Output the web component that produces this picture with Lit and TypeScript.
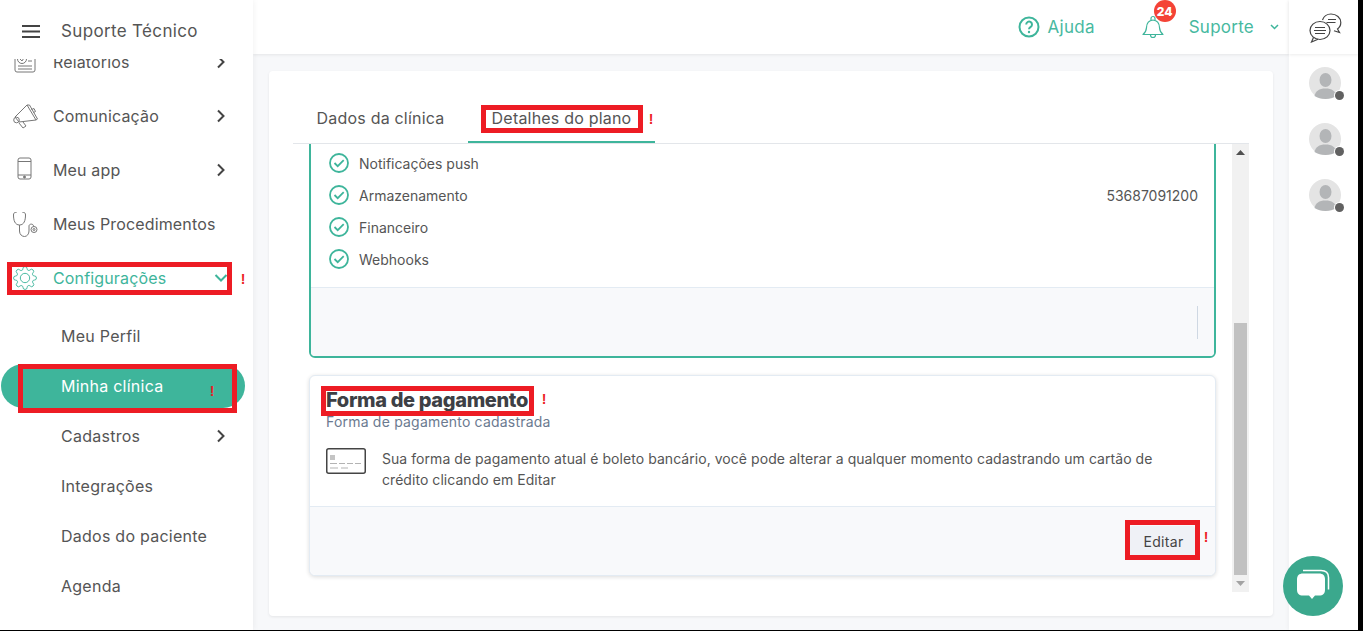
import { LitElement, html, css, svg } from "lit";
import { customElement } from "lit/decorators.js";

const chevronRight = html`<svg class="chev" width="10" height="14" viewBox="0 0 10 14"><path d="M2 1.5 7.500 7 2 12.500" fill="none" stroke="#444" stroke-width="2"/></svg>`;
const chevronDown = html`<svg class="chev" width="14" height="10" viewBox="0 0 14 10"><path d="M1.500 2 7 7.500 12.500 2" fill="none" stroke="#3eb59b" stroke-width="2"/></svg>`;

const icons: Record<string, unknown> = {
  report: svg`<rect x="3" y="3" width="20" height="20" rx="2" fill="none" stroke="#777" stroke-width="1"/><circle cx="10" cy="10" r="4.500" fill="none" stroke="#777"/><path d="m8 10 2 2 2.500-4M16 9h4M16 12h4M6 17h14M6 20h14" fill="none" stroke="#777"/>`,
  megaphone: svg`<g fill="none" stroke="#777" stroke-width="1"><path d="M15 2 24 17 7 19 3 14z"/><path d="M17.500 2 25.500 16 24 17M15 2 17.500 2"/><path d="M19.500 6.500 22 5.500 23.500 8.500 21.500 9.500"/><circle cx="4.500" cy="17" r="2.800"/><path d="M7 20 11 25 14 23 11 19"/></g>`,
  phone: svg`<g fill="none" stroke="#777" stroke-width="1"><rect x="6" y="1" width="13" height="21" rx="2"/><path d="M6 4.500h13M6 18h13"/><circle cx="12.500" cy="20" r="1" fill="#777"/></g>`,
  stetho: svg`<g fill="none" stroke="#777" stroke-width="1"><path d="M4.500 1.500H3.500C2 1.500 1.500 2.500 1.500 4c0 5.500 1.500 10 6 10s6-4.500 6-10c0-1.500-.5-2.500-2-2.500h-1"/><path d="M7.500 14v6c0 3.500 2.500 5.500 5 5.500S17 23 17 20v-5c0-2.500 4.500-2.500 4.500 0v.5"/><circle cx="22" cy="18.500" r="3"/><circle cx="22" cy="18.500" r="1"/></g>`,
  gear: svg`<g fill="none" stroke="#3eb59b" stroke-width=".9" transform="translate(.5 .5)"><circle cx="12" cy="12" r="4.500"/><path d="M19.400 15a1.650 1.650 0 0 0 .33 1.820l.06.06a2 2 0 0 1 0 2.830 2 2 0 0 1-2.830 0l-.06-.06a1.650 1.650 0 0 0-1.820-.33 1.650 1.650 0 0 0-1 1.510V21a2 2 0 0 1-2 2 2 2 0 0 1-2-2v-.09A1.650 1.650 0 0 0 9 19.400a1.650 1.650 0 0 0-1.820.33l-.06.06a2 2 0 0 1-2.830 0 2 2 0 0 1 0-2.830l.06-.06a1.650 1.650 0 0 0 .33-1.820 1.650 1.650 0 0 0-1.510-1H3a2 2 0 0 1-2-2 2 2 0 0 1 2-2h.09A1.650 1.650 0 0 0 4.600 9a1.650 1.650 0 0 0-.33-1.820l-.06-.06a2 2 0 0 1 0-2.830 2 2 0 0 1 2.830 0l.06.06a1.650 1.650 0 0 0 1.820.33H9a1.650 1.650 0 0 0 1-1.510V3a2 2 0 0 1 2-2 2 2 0 0 1 2 2v.09a1.650 1.650 0 0 0 1 1.510 1.650 1.650 0 0 0 1.820-.33l.06-.06a2 2 0 0 1 2.830 0 2 2 0 0 1 0 2.830l-.06.06a1.650 1.650 0 0 0-.33 1.820V9a1.650 1.650 0 0 0 1.510 1H21a2 2 0 0 1 2 2 2 2 0 0 1-2 2h-.09a1.650 1.650 0 0 0-1.510 1z"/></g>`,
};

const navMain = [
  { label: "Relatórios", icon: "report", chev: true },
  { label: "Comunicação", icon: "megaphone", chev: true },
  { label: "Meu app", icon: "phone", chev: true },
  { label: "Meus Procedimentos", icon: "stetho", chev: false },
];
const navSub = [
  { label: "Meu Perfil" },
  { label: "Minha clínica", active: true },
  { label: "Cadastros", chev: true },
  { label: "Integrações" },
  { label: "Dados do paciente" },
  { label: "Agenda" },
];
const features = ["Notificações push", "Armazenamento", "Financeiro", "Webhooks"];
const boxes = [
  { x: 7, y: 262, w: 225, h: 33 },
  { x: 18, y: 364, w: 219, h: 49 },
  { x: 481, y: 105, w: 162, h: 28 },
  { x: 321, y: 386, w: 213, h: 30 },
  { x: 1125, y: 520, w: 75, h: 40 },
];
const marks = [
  { x: 243, y: 279 },
  { x: 212, y: 391 },
  { x: 651, y: 119 },
  { x: 544, y: 399 },
  { x: 1206, y: 537 },
];

@customElement("app-root")
export class AppRoot extends LitElement {
  static styles = css`
    :host { display: block; width: 1363px; height: 631px; background: #000; overflow: hidden;
      font-family: "Inter", "Liberation Sans", sans-serif; color: #555; }
    * { box-sizing: border-box; }
    .frame { position: relative; display: flex; width: 1358px; height: 630px; background: #f7f8fa; overflow: hidden; }

    .sidebar { width: 253px; flex: none; display: flex; flex-direction: column; background: #fff; box-shadow: 1px 0 6px rgba(0,0,0,.05); z-index: 2; }
    .brand { height: 59px; flex: none; display: flex; align-items: center; padding: 3px 0 0 22px; gap: 21px; font-size: 17px; letter-spacing: .35px; color: #555; background: #fff; }
    nav { flex: 1; overflow: hidden; }
    .nav-inner { margin-top: -24px; }
    .item { height: 54px; margin-left: 1px; width: 244px; display: flex; align-items: center; padding: 0 19px 0 11px; gap: 15px; font-size: 16px; letter-spacing: .15px; }
    .item .ico { width: 26px; height: 26px; flex: none; }
    .chev { margin-left: auto; flex: none; }
    .item.open { color: #3eb59b; }
    .item.open .chev { margin-right: -2px; }
    .sub { display: flex; flex-direction: column; gap: 6px; padding-top: 9px; }
    .sub-item { height: 44px; margin-left: 1px; width: 244px; border-radius: 22px; display: flex; align-items: center; padding: 0 19px 0 60px; font-size: 16px; letter-spacing: .25px; }
    .sub-item.active { background: #3eb59b; color: #fff; }

    .center { flex: 1; min-width: 0; display: flex; flex-direction: column; }
    .topbar { height: 54px; flex: none; background: #fff; box-shadow: 0 1px 3px rgba(0,0,0,.08); display: flex; align-items: center; justify-content: flex-end; padding-right: 10px; color: #47b99f; font-size: 17px; letter-spacing: .25px; z-index: 1; }
    .help { display: flex; align-items: center; gap: 8px; margin-right: 47px; }
    .bell { position: relative; display: flex; margin-right: 25px; }
    .badge { position: absolute; left: 12px; top: -15px; width: 22px; height: 22px; border-radius: 50%; background: #f44336; color: #fff; font-size: 12px; font-weight: 800; display: flex; align-items: center; justify-content: center; letter-spacing: 0; }
    .user { display: flex; align-items: center; gap: 16px; }

    .content { flex: 1; min-height: 0; padding: 17px 16px 14px; }
    .card { height: 100%; background: #fff; border-radius: 4px; box-shadow: 0 1px 3px rgba(0,0,0,.08); padding: 24px 24px 24px; display: flex; flex-direction: column; }
    .tabs { display: flex; height: 49px; flex: none; border-bottom: 1px solid #e3e6ea; }
    .tab { height: 48px; display: flex; align-items: center; justify-content: center; padding-bottom: 2px; font-size: 16px; letter-spacing: .2px; }
    .tab.one { width: 175px; }
    .tab.two { width: 187px; border-bottom: 2px solid #3eb59b; padding-bottom: 0; }
    .scrollport { flex: 1; min-height: 0; display: flex; }
    .viewport { flex: 1; min-width: 0; overflow: hidden; padding: 0 16px; }
    .plan { margin-top: -21px; border: 2px solid #3eb59b; border-radius: 6px; background: #fff; }
    .plan-body { padding: 22px 16px 12px 18px; }
    .feat { height: 32px; display: flex; align-items: center; gap: 10px; font-size: 14px; color: #555; }
    .feat svg { flex: none; }
    .feat .val { margin-left: auto; }
    .plan-foot { height: 69px; border-top: 1px solid #e3ebf3; background: #f8f9fb; display: flex; align-items: center; justify-content: flex-end; padding-right: 16px; border-radius: 0 0 4px 4px; }
    .divider { width: 1px; height: 33px; background: #cfd8e3; }
    .pay { margin-top: 17px; height: 201px; border: 1px solid #e3ebf3; border-radius: 6px; background: #fff; box-shadow: 0 1px 4px rgba(0,0,0,.14); display: flex; flex-direction: column; }
    .pay-body { flex: 1; padding: 10px 16px 0; }
    h2 { margin: 0; font-size: 20px; line-height: 28px; font-weight: 800; color: #3d4045; letter-spacing: -.35px; }
    .subtitle { font-size: 14px; line-height: 16px; color: #6b7a90; letter-spacing: .2px; }
    .desc { display: flex; gap: 16px; margin-top: 18px; font-size: 14px; line-height: 21px; color: #555; letter-spacing: .05px; }
    .desc p { margin: 0; max-width: 790px; }
    .pay-foot { height: 69px; flex: none; border-top: 1px solid #e3ebf3; background: #f8f9fb; display: flex; align-items: center; justify-content: flex-end; padding-right: 20px; border-radius: 0 0 6px 6px; }
    .btn { width: 65px; height: 30px; border-radius: 3px; background: #eff1f6; display: flex; align-items: center; justify-content: center; padding-left: 2px; font-size: 14px; color: #444; letter-spacing: .3px; }
    .bar { width: 17px; flex: none; background: #f1f1f1; display: flex; flex-direction: column; align-items: center; }
    .arrow { height: 17px; flex: none; display: flex; align-items: center; justify-content: center; }
    .track { flex: 1; display: flex; flex-direction: column; justify-content: flex-end; width: 13px; }
    .thumb { height: 252px; background: #c1c1c1; }

    .rail { width: 69px; flex: none; background: #fff; box-shadow: -1px 0 4px rgba(0,0,0,.04); z-index: 1; }
    .rail-head { height: 54px; display: flex; align-items: flex-start; padding: 13px 0 0 20px; box-shadow: 0 1px 3px rgba(0,0,0,.08); }
    .avatars { display: flex; flex-direction: column; gap: 24px; padding: 13px 0 0 20px; }
    .avatar { position: relative; width: 32px; height: 32px; }
    .dot { position: absolute; right: -3px; bottom: -1px; width: 9px; height: 9px; border-radius: 50%; background: #616161; box-shadow: 0 0 0 1px #fff; }

    .fab { position: absolute; left: 1283px; top: 556px; width: 60px; height: 60px; border-radius: 50%; background: #3ba88d; display: flex; align-items: center; justify-content: center; z-index: 4; }
    .box { position: absolute; border: 5px solid #ed1c24; z-index: 5; pointer-events: none; }
    .mark { position: absolute; z-index: 5; color: #ed1c24; font: 700 14px/14px "Liberation Sans", sans-serif; transform: translate(-50%, -50%); }
  `;

  render() {
    return html`<div class="frame">
      <aside class="sidebar">
        <header class="brand">
          <svg width="18" height="13" viewBox="0 0 18 13"><path d="M0 1h18M0 6.500h18M0 12h18" stroke="#444" stroke-width="2"/></svg>
          <span>Suporte Técnico</span>
        </header>
        <nav><div class="nav-inner">
          ${navMain.map((n) => html`<div class="item">
            <svg class="ico" viewBox="0 0 26 26">${icons[n.icon]}</svg>
            <span>${n.label}</span>${n.chev ? chevronRight : ""}
          </div>`)}
          <div class="item open">
            <svg class="ico" viewBox="0 0 25 25">${icons.gear}</svg>
            <span>Configurações</span>${chevronDown}
          </div>
          <div class="sub">
            ${navSub.map((s) => html`<div class="sub-item ${s.active ? "active" : ""}">
              <span>${s.label}</span>${s.chev ? chevronRight : ""}
            </div>`)}
          </div>
        </div></nav>
      </aside>

      <div class="center">
        <header class="topbar">
          <div class="help">
            <svg width="22" height="22" viewBox="0 0 22 22"><circle cx="11" cy="11" r="9.500" fill="none" stroke="#3eb59b" stroke-width="2"/><path d="M8.200 8.500a2.900 2.900 0 1 1 4.500 2.400c-1.100.7-1.700 1.200-1.700 2.400" fill="none" stroke="#3eb59b" stroke-width="2"/><circle cx="11" cy="16" r="1.200" fill="#3eb59b"/></svg>
            <span>Ajuda</span>
          </div>
          <div class="bell">
            <svg width="22" height="24" viewBox="0 0 22 24"><path d="M1 19.500c2.500-2 3.300-3.500 3.500-7 .2-4 1.500-7 6.500-7.500 5 .5 6.300 3.500 6.500 7.500.2 3.500 1 5 3.500 7z" fill="none" stroke="#3eb59b" stroke-width="1.200" stroke-linejoin="round"/><path d="M9 5V3.500a2 2 0 0 1 4 0V5M8.500 20a2.500 2.500 0 0 0 5 0" fill="none" stroke="#3eb59b" stroke-width="1.200"/></svg>
            <span class="badge">24</span>
          </div>
          <div class="user">
            <span>Suporte</span>
            <svg width="9" height="6" viewBox="0 0 9 6"><path d="M1 1l3.500 3.500L8 1" fill="none" stroke="#3eb59b" stroke-width="1.500"/></svg>
          </div>
        </header>
        <main class="content">
          <section class="card">
            <div class="tabs">
              <div class="tab one">Dados da clínica</div>
              <div class="tab two">Detalhes do plano</div>
            </div>
            <div class="scrollport">
              <div class="viewport">
                <div class="plan">
                  <div class="plan-body">
                    ${features.map((f, i) => html`<div class="feat">
                      <svg width="20" height="20" viewBox="0 0 20 20"><circle cx="10" cy="10" r="9" fill="none" stroke="#3eb59b" stroke-width="1.800"/><path d="M5.500 10l3.200 3.200 6-6" fill="none" stroke="#3eb59b" stroke-width="1.800"/></svg>
                      <span>${f}</span>
                      ${i === 1 ? html`<span class="val">53687091200</span>` : ""}
                    </div>`)}
                  </div>
                  <div class="plan-foot"><span class="divider"></span></div>
                </div>
                <div class="pay">
                  <div class="pay-body">
                    <h2>Forma de pagamento</h2>
                    <div class="subtitle">Forma de pagamento cadastrada</div>
                    <div class="desc">
                      <svg class="cc" width="40" height="26" viewBox="0 0 40 26"><rect x=".75" y=".75" width="38.500" height="24.500" rx="2" fill="#fff" stroke="#444" stroke-width="1.500"/><rect x="4" y="7" width="5" height="5" fill="#c4c4c4"/><path d="M4 15.500h7M13 15.500h6M21 15.500h6M29 15.500h6M4 20h8M15 20h7" stroke="#aaa" stroke-width=".9"/></svg>
                      <p>Sua forma de pagamento atual é boleto bancário, você pode alterar a qualquer momento cadastrando um cartão de crédito clicando em Editar</p>
                    </div>
                  </div>
                  <div class="pay-foot"><div class="btn">Editar</div></div>
                </div>
              </div>
              <div class="bar">
                <div class="arrow"><svg width="9" height="5" viewBox="0 0 9 5"><path d="M0 5 4.500 0 9 5z" fill="#505050"/></svg></div>
                <div class="track"><div class="thumb"></div></div>
                <div class="arrow"><svg width="9" height="5" viewBox="0 0 9 5"><path d="M0 0 4.500 5 9 0z" fill="#a3a3a3"/></svg></div>
              </div>
            </div>
          </section>
        </main>
      </div>

      <aside class="rail">
        <div class="rail-head">
          <svg width="33" height="30" viewBox="0 0 33 30"><g fill="none" stroke="#444" stroke-width="1.200"><path d="M13.500 7C14.500 3.500 18 1 22 1c5.500 0 9.800 3.700 9.800 8.500 0 2.800-1.300 5-3.300 6.500l2 3.500-5.500-1.800"/><path d="M19 6.500h8M17.500 9.500h9"/><ellipse cx="11" cy="17.500" rx="10" ry="9"/><path d="M4.500 24.500 2.500 29 9 26.300"/><path d="M6 14.500h10M5 17.500h12M6 20.500h10"/></g></svg>
        </div>
        <div class="avatars">
          ${[0, 1, 2].map(() => html`<div class="avatar">
            <svg width="32" height="32" viewBox="0 0 32 32"><circle cx="16" cy="16" r="16" fill="#e4e4e4"/><ellipse cx="16.500" cy="13" rx="6" ry="7" fill="#b3b5b7"/><path d="M5.500 29c1-5 4.500-7.500 11-7.500S26.500 24 27.500 29c-3 2-7 3-11 3s-8-1-11-3z" fill="#b3b5b7"/></svg>
            <span class="dot"></span>
          </div>`)}
        </div>
      </aside>

      <div class="fab">
        <svg width="38" height="34" viewBox="0 0 38 34"><path d="M9 1.500h18c5 0 7.500 2.500 7.500 7v12" fill="none" stroke="#fff" stroke-width="1.500"/><path d="M9 4.500h16c4 0 6 2 6 6v10c0 4-2 6-6 6h-4l-3 3.500-3-3.500H9c-4 0-6-2-6-6v-10c0-4 2-6 6-6z" fill="#fff"/></svg>
      </div>

      ${boxes.map((b) => html`<div class="box" style="left:${b.x}px;top:${b.y}px;width:${b.w}px;height:${b.h}px"></div>`)}
      ${marks.map((m) => html`<span class="mark" style="left:${m.x}px;top:${m.y}px">!</span>`)}
    </div>`;
  }
}
